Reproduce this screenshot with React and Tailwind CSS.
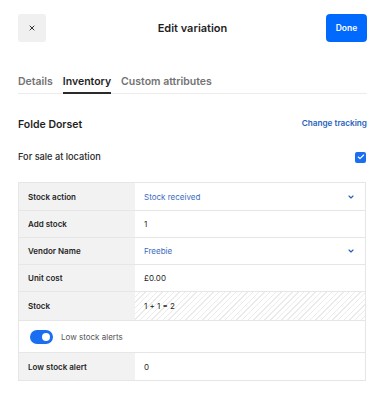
import { Check, ChevronDown, X } from 'lucide-react';

const rows = [
  { label: 'Stock action', value: 'Stock received', select: true, h: 'h-[28px]' },
  { label: 'Add stock', value: '1', h: 'h-[27px]' },
  { label: 'Vendor Name', value: 'Freebie', select: true, h: 'h-[27px]' },
  { label: 'Unit cost', value: '£0.00', h: 'h-[27px]' },
  { label: 'Stock', value: '1 + 1 = 2', hatched: true, h: 'h-[29px]' },
];

const Row = ({ label, value, select, hatched, h }) => (
  <div className={`flex ${h} border-b border-[#e6e6e6]`}>
    <div className="flex w-[116px] shrink-0 items-center bg-[#f2f2f2] pl-[9px] text-[8px] font-semibold text-[#1f1f1f]">
      {label}
    </div>
    <div
      className={`flex flex-1 items-center justify-between pl-[9px] pr-[10px] text-[8px] ${
        select ? 'text-[#3a6cc0]' : 'text-[#1f1f1f]'
      } ${
        hatched
          ? 'bg-[repeating-linear-gradient(135deg,#ffffff_0px,#ffffff_3px,#ebebeb_3px,#ebebeb_4px)]'
          : 'bg-white'
      }`}
    >
      <span>{value}</span>
      {select && <ChevronDown className="h-[8px] w-[8px] text-[#2c5fb8]" strokeWidth={3.5} />}
    </div>
  </div>
);

export default function App() {
  return (
    <div className="h-[400px] w-[381px] bg-white font-['Inter',sans-serif] text-[#1f1f1f]">
      <header className="grid grid-cols-[1fr_auto_1fr] items-center pl-[18px] pr-[14px] pt-[14px]">
        <button className="flex h-[28px] w-[28px] items-center justify-center rounded-[3px] bg-[#f0f0f0]">
          <X className="h-[8px] w-[8px] text-[#333]" strokeWidth={3} />
        </button>
        <h1 className="text-[11px] font-semibold">Edit variation</h1>
        <button className="flex h-[28px] w-[41px] items-center justify-center justify-self-end rounded-[4px] bg-[#006aff] text-[8.5px] font-semibold text-white">
          Done
        </button>
      </header>

      <nav className="ml-[18px] mr-[14px] mt-[33px] flex gap-[10px] border-b border-[#ececec] text-[10.5px] leading-[14px] font-semibold">
        <span className="pb-[4px] text-[#737373]">Details</span>
        <span className="-mb-px border-b-2 border-[#2a2a2a] pb-[3px] text-[#1f1f1f]">Inventory</span>
        <span className="pb-[4px] text-[#737373]">Custom attributes</span>
      </nav>

      <div className="ml-[18px] mr-[14px] mt-[24px] flex h-[14px] items-center justify-between">
        <h2 className="text-[10.5px] font-semibold">Folde Dorset</h2>
        <a className="-mt-[3px] text-[8.2px] font-semibold text-[#2a62c0]">Change tracking</a>
      </div>

      <div className="ml-[18px] mr-[15px] mt-[19px] flex h-[12px] items-center justify-between">
        <span className="text-[9.2px] font-medium text-[#2a2a2a]">For sale at location</span>
        <span className="flex h-[11px] w-[11px] items-center justify-center rounded-[2px] bg-[#1a6ff0]">
          <Check className="h-[8px] w-[8px] text-white" strokeWidth={3.5} />
        </span>
      </div>

      <div className="ml-[18px] mr-[15px] mt-[19px] border-x border-t border-[#e6e6e6]">
        {rows.map((r) => (
          <Row key={r.label} {...r} />
        ))}
        <div className="flex h-[32px] items-center gap-[8px] border-b border-[#e6e6e6] pl-[11px] text-[8px] text-[#555]">
          <span className="flex h-[14px] w-[23px] items-center justify-end rounded-full bg-[#1a6ff0] pr-[3px]">
            <span className="h-[8px] w-[8px] rounded-full bg-white" />
          </span>
          <span>Low stock alerts</span>
        </div>
        <Row label="Low stock alert" value="0" h="h-[28px]" />
      </div>
    </div>
  );
}
